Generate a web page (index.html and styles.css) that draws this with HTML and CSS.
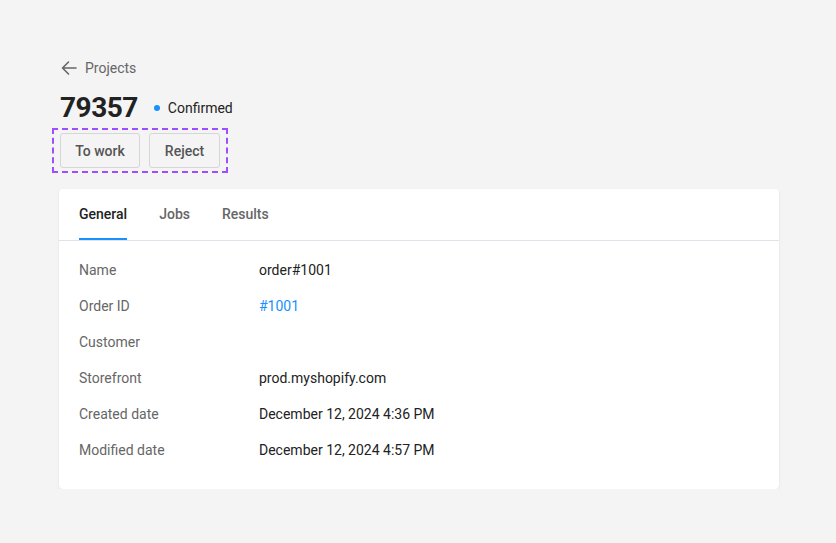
FILE: index.html
```html
<!DOCTYPE html>
<html lang="en">
<head>
<meta charset="utf-8">
<title>79357</title>
<link rel="stylesheet" href="styles.css">
</head>
<body>
<div class="page">
  <a class="back" href="#">
    <svg class="back-icon" width="16" height="16" viewBox="0 0 16 16" fill="none" stroke="currentColor" stroke-width="1.6" stroke-linecap="round" stroke-linejoin="round"><path d="M15 8H1.5M7.5 2L1.5 8l6 6"/></svg>
    <span>Projects</span>
  </a>
  <div class="title-row">
    <h1 class="title">79357</h1>
    <span class="status"><span class="dot"></span>Confirmed</span>
  </div>
  <div class="actions">
    <button class="btn btn-work">To work</button>
    <button class="btn btn-reject">Reject</button>
  </div>
  <div class="card">
    <div class="tabs">
      <div class="tab active">General</div>
      <div class="tab">Jobs</div>
      <div class="tab">Results</div>
    </div>
    <div class="fields">
      <div class="row"><div class="label">Name</div><div class="value">order#1001</div></div>
      <div class="row"><div class="label">Order ID</div><div class="value"><a class="link" href="#">#1001</a></div></div>
      <div class="row"><div class="label">Customer</div><div class="value"></div></div>
      <div class="row"><div class="label">Storefront</div><div class="value">prod.myshopify.com</div></div>
      <div class="row"><div class="label">Created date</div><div class="value">December 12, 2024 4:36 PM</div></div>
      <div class="row"><div class="label">Modified date</div><div class="value">December 12, 2024 4:57 PM</div></div>
    </div>
  </div>
</div>
</body>
</html>
```

FILE: styles.css
```css
* { box-sizing: border-box; }
html, body {
  margin: 0;
  background: #f4f4f4;
  font-family: Roboto, "Liberation Sans", Arial, sans-serif;
  font-size: 14px;
  color: #222;
}
.page {
  padding: 56px 0 0 59px;
  width: 779px;
}
.back {
  display: flex;
  align-items: center;
  height: 24px;
  color: #666;
  text-decoration: none;
  font-size: 14px;
}
.back-icon {
  margin-left: 2px;
  margin-right: 8px;
  color: #666;
}
.title-row {
  display: flex;
  align-items: center;
  height: 36px;
  margin-top: 10px;
}
.title {
  margin: 0 0 0 1px;
  font-size: 28px;
  font-weight: 700;
  line-height: 36px;
  color: #222;
  letter-spacing: -0.5px;
}
.status {
  display: flex;
  align-items: center;
  margin-left: 16px;
  font-size: 14px;
  color: #222;
}
.dot {
  width: 6px;
  height: 6px;
  border-radius: 50%;
  background: #1890ff;
  margin-right: 8px;
}
.actions {
  display: inline-flex;
  gap: 9px;
  margin: 2px 0 0 -7px;
  padding: 3px 6px;
  border: 2px dashed #9d4eff;
}
.btn {
  height: 35px;
  padding: 0;
  border: 1px solid #d6d6d6;
  border-radius: 3px;
  background: #f4f4f4;
  color: #555;
  font-family: inherit;
  font-size: 14px;
  font-weight: 500;
  white-space: nowrap;
}
.btn-work { width: 80px; }
.btn-reject { width: 71px; }
.card {
  margin-top: 16px;
  width: 720px;
  background: #fff;
  border-radius: 4px;
  box-shadow: 0 1px 3px rgba(0, 0, 0, 0.08);
  padding-bottom: 21px;
}
.tabs {
  display: flex;
  gap: 32px;
  padding: 0 20px;
  height: 52px;
  border-bottom: 1px solid #dfe3ea;
}
.tab {
  display: flex;
  align-items: center;
  height: 51px;
  padding-top: 1px;
  color: #666;
  font-weight: 500;
  font-size: 14px;
  border-bottom: 2px solid transparent;
}
.tab.active {
  color: #222;
  border-bottom-color: #1890ff;
}
.fields {
  padding: 11px 20px 0;
}
.row {
  display: flex;
  align-items: center;
  height: 36px;
}
.label {
  width: 180px;
  color: #666;
}
.value {
  color: #222;
}
.link {
  color: #1890ff;
  text-decoration: none;
}
```
